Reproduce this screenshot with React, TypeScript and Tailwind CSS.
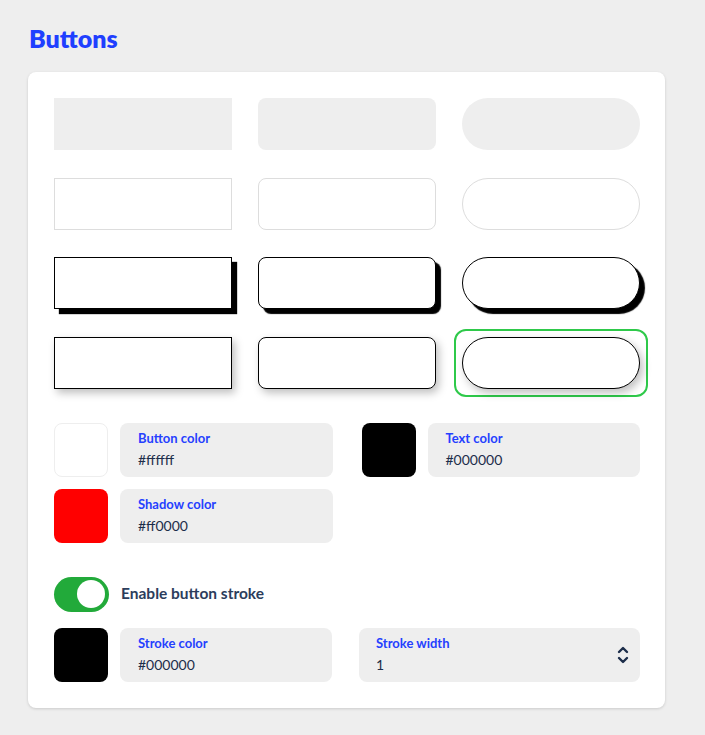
import React from 'react'

const font = { fontFamily: 'Lato, "Noto Sans", sans-serif' }

function ColorField({ label, value, swatch }: { label: string; value: string; swatch: string }) {
  return (
    <div className="flex gap-3">
      <div className={`h-[54px] w-[54px] shrink-0 rounded-lg ${swatch}`} />
      <div className="flex h-[54px] flex-1 flex-col justify-center gap-1 rounded-lg bg-[#eeeeee] pl-[18px]">
        <span className="text-[13px] font-bold leading-4 text-[#2540ff]">{label}</span>
        <span className="text-sm leading-5 text-[#1c2d4a]">{value}</span>
      </div>
    </div>
  )
}

export default function App() {
  return (
    <div className="min-h-[735px] bg-[#eeeeee] pl-[28px] pt-[22px]" style={font}>
      <h1 className="mb-[18px] pl-px text-[25px] font-extrabold leading-8 text-[#1f3fff]">Buttons</h1>
      <div className="w-[637px] rounded-lg bg-white p-[26px] pr-[25px] shadow-[0_1px_3px_rgba(0,0,0,0.15)]">
        <div className="grid grid-cols-3 gap-x-[26px] gap-y-[27.5px]">
          <div className="h-[52px] bg-[#eeeeee]" />
          <div className="h-[52px] rounded-lg bg-[#eeeeee]" />
          <div className="h-[52px] rounded-full bg-[#eeeeee]" />

          <div className="h-[52px] border border-[#dddddd] bg-white" />
          <div className="h-[52px] rounded-lg border border-[#dddddd] bg-white" />
          <div className="h-[52px] rounded-full border border-[#dddddd] bg-white" />

          <div className="h-[52px] border border-black bg-white shadow-[5px_5px_1px_#000]" />
          <div className="h-[52px] rounded-lg border border-black bg-white shadow-[5px_5px_1px_#000]" />
          <div className="h-[52px] rounded-full border border-black bg-white shadow-[5px_5px_1px_#000]" />

          <div className="h-[52px] border border-black bg-white shadow-[3px_4px_8px_rgba(0,0,0,0.25)]" />
          <div className="h-[52px] rounded-lg border border-black bg-white shadow-[3px_4px_8px_rgba(0,0,0,0.25)]" />
          <div className="-m-[8px] rounded-xl border-2 border-[#2ec94a] p-[6px]">
            <div className="h-[52px] rounded-full border border-black bg-white shadow-[3px_4px_8px_rgba(0,0,0,0.25)]" />
          </div>
        </div>

        <div className="mt-[34px] grid grid-cols-2 gap-x-[29px] gap-y-3">
          <ColorField label="Button color" value="#ffffff" swatch="border border-[#eeeeee] bg-white" />
          <ColorField label="Text color" value="#000000" swatch="bg-black" />
          <ColorField label="Shadow color" value="#ff0000" swatch="bg-[#ff0000]" />
          <div />
        </div>

        <div className="mt-[34px] flex items-center gap-3">
          <div className="flex h-[35px] w-[55px] items-center justify-end rounded-full bg-[#22aa3a] pr-[4px]">
            <div className="h-[28px] w-[28px] rounded-full bg-white" />
          </div>
          <span className="text-[15.5px] font-bold text-[#2c3d5c]">Enable button stroke</span>
        </div>

        <div className="mt-4 grid grid-cols-[278px_1fr] gap-x-[27px]">
          <ColorField label="Stroke color" value="#000000" swatch="bg-black" />
          <div className="flex h-[54px] items-center justify-between rounded-lg bg-[#eeeeee] pl-[17px] pr-[11px]">
            <div className="flex flex-col gap-1">
              <span className="text-[13px] font-bold leading-4 text-[#2540ff]">Stroke width</span>
              <span className="text-sm leading-5 text-[#1c2d4a]">1</span>
            </div>
            <svg width="12" height="20" viewBox="0 0 12 20" fill="none" stroke="#1c2d4a" strokeWidth="2.4" strokeLinecap="round" strokeLinejoin="round">
              <path d="M2 7 L6 3 L10 7" />
              <path d="M2 13 L6 17 L10 13" />
            </svg>
          </div>
        </div>
      </div>
    </div>
  )
}
